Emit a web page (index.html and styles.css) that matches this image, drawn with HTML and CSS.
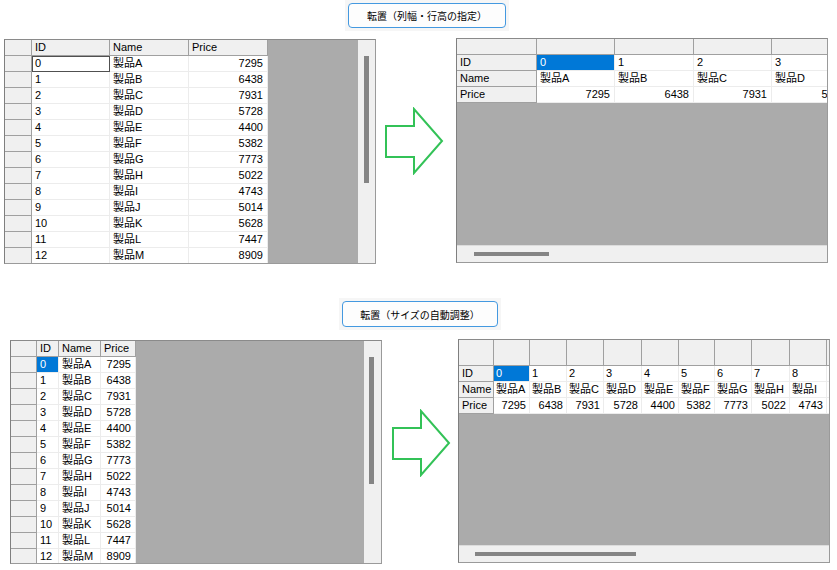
FILE: index.html
```html
<!DOCTYPE html>
<html lang="ja">
<head>
    <meta charset="UTF-8">
    <title>転置サンプル</title>
    <link rel="stylesheet" href="styles.css">
</head>
<body>
    <!-- 転置（列幅・行高の指定） -->
    <section class="demo demo-fixed">
        <div class="btn-row">
            <span class="btn-wrap"><button class="btn" type="button">転置（列幅・行高の指定）</button></span>
        </div>
        <div class="demo-row">
            <div class="dgv dgv-src">
                <div class="tbl">
                    <div class="h"></div><div class="h">ID</div><div class="h">Name</div><div class="h">Price</div>
                    <div class="h"></div><div class="c focus">0</div><div class="c">製品A</div><div class="c num">7295</div>
                    <div class="h"></div><div class="c">1</div><div class="c">製品B</div><div class="c num">6438</div>
                    <div class="h"></div><div class="c">2</div><div class="c">製品C</div><div class="c num">7931</div>
                    <div class="h"></div><div class="c">3</div><div class="c">製品D</div><div class="c num">5728</div>
                    <div class="h"></div><div class="c">4</div><div class="c">製品E</div><div class="c num">4400</div>
                    <div class="h"></div><div class="c">5</div><div class="c">製品F</div><div class="c num">5382</div>
                    <div class="h"></div><div class="c">6</div><div class="c">製品G</div><div class="c num">7773</div>
                    <div class="h"></div><div class="c">7</div><div class="c">製品H</div><div class="c num">5022</div>
                    <div class="h"></div><div class="c">8</div><div class="c">製品I</div><div class="c num">4743</div>
                    <div class="h"></div><div class="c">9</div><div class="c">製品J</div><div class="c num">5014</div>
                    <div class="h"></div><div class="c">10</div><div class="c">製品K</div><div class="c num">5628</div>
                    <div class="h"></div><div class="c">11</div><div class="c">製品L</div><div class="c num">7447</div>
                    <div class="h"></div><div class="c">12</div><div class="c">製品M</div><div class="c num">8909</div>
                </div>
                <div class="fill"></div>
                <div class="vbar"><div class="thumb"></div></div>
            </div>

            <svg class="arrow" width="60" height="68" viewBox="0 0 60 68">
                <polygon points="2,19 30,19 30,2 58,34 30,66 30,50 2,50" />
            </svg>

            <div class="dgv dgv-dst">
                <div class="tbl">
                    <div class="h"></div><div class="h"></div><div class="h"></div><div class="h"></div><div class="h"></div>
                    <div class="h">ID</div><div class="c sel">0</div><div class="c">1</div><div class="c">2</div><div class="c">3</div>
                    <div class="h">Name</div><div class="c">製品A</div><div class="c">製品B</div><div class="c">製品C</div><div class="c">製品D</div>
                    <div class="h">Price</div><div class="c num">7295</div><div class="c num">6438</div><div class="c num">7931</div><div class="c num">5728</div>
                </div>
                <div class="fill"></div>
                <div class="hbar"><div class="thumb"></div></div>
            </div>
        </div>
    </section>

    <!-- 転置（サイズの自動調整） -->
    <section class="demo demo-auto">
        <div class="btn-row">
            <span class="btn-wrap"><button class="btn" type="button">転置（サイズの自動調整）</button></span>
        </div>
        <div class="demo-row">
            <div class="dgv dgv-src">
                <div class="tbl">
                    <div class="h"></div><div class="h">ID</div><div class="h">Name</div><div class="h">Price</div>
                    <div class="h"></div><div class="c sel">0</div><div class="c">製品A</div><div class="c num">7295</div>
                    <div class="h"></div><div class="c">1</div><div class="c">製品B</div><div class="c num">6438</div>
                    <div class="h"></div><div class="c">2</div><div class="c">製品C</div><div class="c num">7931</div>
                    <div class="h"></div><div class="c">3</div><div class="c">製品D</div><div class="c num">5728</div>
                    <div class="h"></div><div class="c">4</div><div class="c">製品E</div><div class="c num">4400</div>
                    <div class="h"></div><div class="c">5</div><div class="c">製品F</div><div class="c num">5382</div>
                    <div class="h"></div><div class="c">6</div><div class="c">製品G</div><div class="c num">7773</div>
                    <div class="h"></div><div class="c">7</div><div class="c">製品H</div><div class="c num">5022</div>
                    <div class="h"></div><div class="c">8</div><div class="c">製品I</div><div class="c num">4743</div>
                    <div class="h"></div><div class="c">9</div><div class="c">製品J</div><div class="c num">5014</div>
                    <div class="h"></div><div class="c">10</div><div class="c">製品K</div><div class="c num">5628</div>
                    <div class="h"></div><div class="c">11</div><div class="c">製品L</div><div class="c num">7447</div>
                    <div class="h"></div><div class="c">12</div><div class="c">製品M</div><div class="c num">8909</div>
                </div>
                <div class="fill"></div>
                <div class="vbar"><div class="thumb"></div></div>
            </div>

            <svg class="arrow" width="60" height="68" viewBox="0 0 60 68">
                <polygon points="2,19 30,19 30,2 58,34 30,66 30,50 2,50" />
            </svg>

            <div class="dgv dgv-dst">
                <div class="tbl">
                    <div class="h"></div><div class="h"></div><div class="h"></div><div class="h"></div><div class="h"></div><div class="h"></div><div class="h"></div><div class="h"></div><div class="h"></div><div class="h"></div><div class="h"></div>
                    <div class="h">ID</div><div class="c sel">0</div><div class="c">1</div><div class="c">2</div><div class="c">3</div><div class="c">4</div><div class="c">5</div><div class="c">6</div><div class="c">7</div><div class="c">8</div><div class="c">9</div>
                    <div class="h">Name</div><div class="c">製品A</div><div class="c">製品B</div><div class="c">製品C</div><div class="c">製品D</div><div class="c">製品E</div><div class="c">製品F</div><div class="c">製品G</div><div class="c">製品H</div><div class="c">製品I</div><div class="c">製品J</div>
                    <div class="h">Price</div><div class="c num">7295</div><div class="c num">6438</div><div class="c num">7931</div><div class="c num">5728</div><div class="c num">4400</div><div class="c num">5382</div><div class="c num">7773</div><div class="c num">5022</div><div class="c num">4743</div><div class="c num">5014</div>
                </div>
                <div class="fill"></div>
                <div class="hbar"><div class="thumb"></div></div>
            </div>
        </div>
    </section>
</body>
</html>
```

FILE: styles.css
```css
:root {
    --grid-bg: #ababab;
    --header-bg: #f0f0f0;
    --header-line: #a0a0a0;
    --cell-line: #ececec;
    --border: #9a9a9a;
    --select: #0078d7;
    --arrow: #33c257;
}
* {
    box-sizing: border-box;
}
body {
    margin: 0;
    background: #fff;
    color: #000;
    font-family: "Liberation Sans", "Noto Sans CJK JP", sans-serif;
    font-size: 11px;
}

/* ボタン */
.btn-row {
    display: flex;
}
.btn-wrap {
    background: #f6f6f6;
    padding: 3px;
}
.btn {
    display: block;
    height: 25px;
    width: 158px;
    padding: 0;
    border: 1px solid #4499e0;
    border-radius: 4px;
    background: #fdfdfd;
    color: #000;
    font-family: "Noto Sans CJK JP", sans-serif;
    font-size: 10px;
}
.demo-fixed .btn-row {
    padding-left: 345px;
}
.demo-auto {
    margin-top: 34px;
}
.demo-auto .btn-row {
    padding-left: 339px;
}
.demo-auto .btn {
    width: 156px;
    height: 26px;
}

/* 行レイアウト */
.demo-row {
    display: flex;
    align-items: flex-start;
}
.demo-fixed .demo-row {
    margin-top: 7px;
}
.demo-auto .demo-row {
    margin-top: 9px;
}
.arrow {
    flex: none;
}
.arrow polygon {
    fill: #fff;
    stroke: var(--arrow);
    stroke-width: 2;
}
.demo-fixed .arrow {
    margin: 69px 0 0 8px;
}
.demo-auto .arrow {
    margin: 70px 0 0 9px;
}

/* DataGridView */
.dgv {
    flex: none;
    display: flex;
    width: 372px;
    overflow: hidden;
    background: var(--grid-bg);
    border: 1px solid var(--border);
    border-left-color: #7f7f7f;
    border-top-color: #8a8a8a;
}
.dgv-src {
    flex-direction: row;
    margin-top: 1px;
}
.dgv-dst {
    flex-direction: column;
}
.tbl {
    flex: none;
    display: grid;
    grid-auto-rows: 16px;
    width: max-content;
    align-self: flex-start;
}
.fill {
    flex: 1;
}
.h, .c {
    height: 100%;
    border-right: 1px solid var(--cell-line);
    border-bottom: 1px solid var(--cell-line);
    padding: 0 3px;
    line-height: 15px;
    white-space: nowrap;
    overflow: hidden;
}
.h {
    background: var(--header-bg);
    border-color: var(--header-line);
}
.c {
    background: #fff;
}
.c.num {
    text-align: right;
    padding-right: 4px;
}
.c.sel {
    background: var(--select);
    color: #fff;
}
.c.focus {
    outline: 1px solid #505050;
    outline-offset: -1px;
}

/* スクロールバー */
.vbar {
    flex: none;
    width: 17px;
    background: var(--header-bg);
    padding: 16px 0 0 6px;
}
.hbar {
    flex: none;
    height: 17px;
    background: var(--header-bg);
    border-top: 1px solid #dcdcdc;
    padding-top: 6px;
}
.thumb {
    background: #858585;
}
.vbar .thumb {
    width: 5px;
    height: 127px;
}
.hbar .thumb {
    height: 4px;
}

/* 上段 */
.demo-fixed .dgv-src {
    height: 225px;
    margin-left: 4px;
}
.demo-fixed .dgv-src .tbl {
    grid-template-columns: 27px 78px 79px 79px;
}
.demo-fixed .dgv-dst {
    height: 225px;
    margin-left: 12px;
}
.demo-fixed .dgv-dst .tbl {
    grid-template-columns: 80px 78px 79px 78px 79px;
}
.demo-fixed .dgv-dst .fill {
    flex: none;
    height: 142px;
}
.demo-fixed .hbar .thumb {
    margin-left: 17px;
    width: 75px;
}

/* 下段 */
.demo-auto .dgv-src {
    height: 224px;
    margin-left: 10px;
}
.demo-auto .dgv-src .tbl {
    grid-template-columns: 26px 22px 42px 35px;
}
.demo-auto .vbar {
    padding-left: 5px;
}
.demo-auto .dgv-dst {
    height: 224px;
    margin-left: 7px;
}
.demo-auto .dgv-dst .tbl {
    grid-template-columns: 35px 36px 37px 37px 38px 37px 36px 37px 38px 37px 37px;
    grid-template-rows: 26px;
}
.demo-auto .dgv-dst .fill {
    flex: none;
    height: 131px;
}
.demo-auto .dgv-dst .c {
    padding: 0 2px;
}
.demo-auto .dgv-dst .c.num {
    padding-right: 3px;
}
.demo-auto .hbar .thumb {
    margin-left: 16px;
    width: 161px;
}
```
